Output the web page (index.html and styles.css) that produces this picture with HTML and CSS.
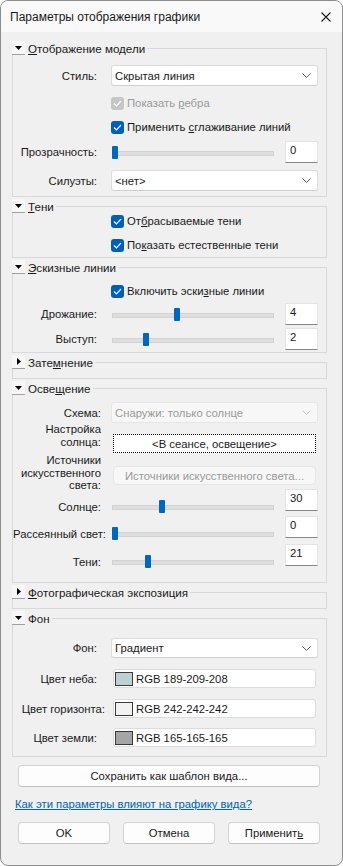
FILE: index.html
```html
<!DOCTYPE html>
<html lang="ru">
<head>
    <meta charset="UTF-8">
    <meta name="viewport" content="width=device-width, initial-scale=1.0">
    <title>Параметры отображения графики</title>
    <link rel="stylesheet" href="styles.css">
</head>
<body>
<div class="window">

    <div class="titlebar">
        <span class="title">Параметры отображения графики</span>
        <svg class="close" width="10" height="10" viewBox="0 0 10 10"><path d="M0.5 0.5 L9.5 9.5 M9.5 0.5 L0.5 9.5" stroke="#1a1a1a" stroke-width="1.1" fill="none"/></svg>
    </div>

    <div class="content">

        <!-- Отображение модели -->
        <section class="group">
            <div class="group-head">
                <span class="toggle"><svg width="7" height="4" viewBox="0 0 7 4"><polygon points="0,0 7,0 3.5,4" fill="#000"/></svg></span>
                <span class="group-title"><u>О</u>тображение модели</span>
            </div>
            <div class="group-box box-model">
                <div class="row">
                    <span class="label">Стиль:</span>
                    <div class="select">Скрытая линия<svg class="chevron" width="9" height="5" viewBox="0 0 9 5"><path d="M0.5 0.5 L4.5 4.5 L8.5 0.5" stroke="#5c5c5c" fill="none"/></svg></div>
                </div>
                <div class="check-row first">
                    <span class="checkbox disabled"><svg width="9" height="7" viewBox="0 0 9 7"><path d="M1 3.5 L3.5 6 L8 1" stroke="#fff" stroke-width="1.2" fill="none"/></svg></span>
                    <span class="check-text muted">Показать <u>р</u>ебра</span>
                </div>
                <div class="check-row">
                    <span class="checkbox"><svg width="9" height="7" viewBox="0 0 9 7"><path d="M1 3.5 L3.5 6 L8 1" stroke="#fff" stroke-width="1.2" fill="none"/></svg></span>
                    <span class="check-text">Применить <u>с</u>глаживание линий</span>
                </div>
                <div class="row slider-row transp">
                    <span class="label">Прозрачность:</span>
                    <div class="slider"><span class="thumb" style="--v:0"></span></div>
                    <div class="num">0</div>
                </div>
                <div class="row silh">
                    <span class="label">Силуэты:</span>
                    <div class="select">&lt;нет&gt;<svg class="chevron" width="9" height="5" viewBox="0 0 9 5"><path d="M0.5 0.5 L4.5 4.5 L8.5 0.5" stroke="#5c5c5c" fill="none"/></svg></div>
                </div>
            </div>
        </section>

        <!-- Тени -->
        <section class="group">
            <div class="group-head">
                <span class="toggle"><svg width="7" height="4" viewBox="0 0 7 4"><polygon points="0,0 7,0 3.5,4" fill="#000"/></svg></span>
                <span class="group-title"><u>Т</u>ени</span>
            </div>
            <div class="group-box box-shadows">
                <div class="check-row">
                    <span class="checkbox"><svg width="9" height="7" viewBox="0 0 9 7"><path d="M1 3.5 L3.5 6 L8 1" stroke="#fff" stroke-width="1.2" fill="none"/></svg></span>
                    <span class="check-text">От<u>б</u>расываемые тени</span>
                </div>
                <div class="check-row">
                    <span class="checkbox"><svg width="9" height="7" viewBox="0 0 9 7"><path d="M1 3.5 L3.5 6 L8 1" stroke="#fff" stroke-width="1.2" fill="none"/></svg></span>
                    <span class="check-text">По<u>к</u>азать естественные тени</span>
                </div>
            </div>
        </section>

        <!-- Эскизные линии -->
        <section class="group">
            <div class="group-head">
                <span class="toggle"><svg width="7" height="4" viewBox="0 0 7 4"><polygon points="0,0 7,0 3.5,4" fill="#000"/></svg></span>
                <span class="group-title"><u>Э</u>скизные линии</span>
            </div>
            <div class="group-box box-sketch">
                <div class="check-row">
                    <span class="checkbox"><svg width="9" height="7" viewBox="0 0 9 7"><path d="M1 3.5 L3.5 6 L8 1" stroke="#fff" stroke-width="1.2" fill="none"/></svg></span>
                    <span class="check-text">Включить эски<u>з</u>ные линии</span>
                </div>
                <div class="row slider-row">
                    <span class="label">Дрожание:</span>
                    <div class="slider"><span class="thumb" style="--v:0.4"></span></div>
                    <div class="num">4</div>
                </div>
                <div class="row slider-row next">
                    <span class="label">Выступ:</span>
                    <div class="slider"><span class="thumb" style="--v:0.2"></span></div>
                    <div class="num">2</div>
                </div>
            </div>
        </section>

        <!-- Затемнение -->
        <section class="group">
            <div class="group-head">
                <span class="toggle"><svg width="4" height="7" viewBox="0 0 4 7"><polygon points="0,0 4,3.5 0,7" fill="#000"/></svg></span>
                <span class="group-title">Зате<u>м</u>нение</span>
            </div>
            <div class="group-box collapsed"></div>
        </section>

        <!-- Освещение -->
        <section class="group">
            <div class="group-head">
                <span class="toggle"><svg width="7" height="4" viewBox="0 0 7 4"><polygon points="0,0 7,0 3.5,4" fill="#000"/></svg></span>
                <span class="group-title">Осве<u>щ</u>ение</span>
            </div>
            <div class="group-box box-light">
                <div class="row">
                    <span class="label">Схема:</span>
                    <div class="select disabled">Снаружи: только солнце<svg class="chevron" width="9" height="5" viewBox="0 0 9 5"><path d="M0.5 0.5 L4.5 4.5 L8.5 0.5" stroke="#c4c4c4" fill="none"/></svg></div>
                </div>
                <div class="row tall sun-setup">
                    <span class="label multi">Настройка<br>солнца:</span>
                    <button type="button" class="field-btn focused">&lt;В сеансе, освещение&gt;</button>
                </div>
                <div class="row tall artificial">
                    <span class="label multi">Источники<br>искусственного<br>света:</span>
                    <button type="button" class="field-btn disabled">Источники искусственного света...</button>
                </div>
                <div class="row slider-row lifted">
                    <span class="label">Солнце:</span>
                    <div class="slider"><span class="thumb" style="--v:0.3"></span></div>
                    <div class="num">30</div>
                </div>
                <div class="row slider-row lifted ambient">
                    <span class="label">Рассеянный свет:</span>
                    <div class="slider"><span class="thumb" style="--v:0"></span></div>
                    <div class="num">0</div>
                </div>
                <div class="row slider-row lifted last">
                    <span class="label">Тени:</span>
                    <div class="slider"><span class="thumb" style="--v:0.21"></span></div>
                    <div class="num">21</div>
                </div>
            </div>
        </section>

        <!-- Фотографическая экспозиция -->
        <section class="group">
            <div class="group-head">
                <span class="toggle"><svg width="4" height="7" viewBox="0 0 4 7"><polygon points="0,0 4,3.5 0,7" fill="#000"/></svg></span>
                <span class="group-title"><u>Ф</u>отографическая экспозиция</span>
            </div>
            <div class="group-box collapsed"></div>
        </section>

        <!-- Фон -->
        <section class="group">
            <div class="group-head">
                <span class="toggle"><svg width="7" height="4" viewBox="0 0 7 4"><polygon points="0,0 7,0 3.5,4" fill="#000"/></svg></span>
                <span class="group-title">Фон</span>
            </div>
            <div class="group-box box-bg">
                <div class="row bg-select">
                    <span class="label">Фон:</span>
                    <div class="select">Градиент<svg class="chevron" width="9" height="5" viewBox="0 0 9 5"><path d="M0.5 0.5 L4.5 4.5 L8.5 0.5" stroke="#5c5c5c" fill="none"/></svg></div>
                </div>
                <div class="row color-row">
                    <span class="label">Цвет неба:</span>
                    <div class="color-field"><span class="swatch sky"></span>RGB 189-209-208</div>
                </div>
                <div class="row color-row">
                    <span class="label wide">Цвет горизонта:</span>
                    <div class="color-field"><span class="swatch horizon"></span>RGB 242-242-242</div>
                </div>
                <div class="row color-row ground-row">
                    <span class="label">Цвет земли:</span>
                    <div class="color-field"><span class="swatch ground"></span>RGB 165-165-165</div>
                </div>
            </div>
        </section>

        <button type="button" class="btn save-btn">Сохранить как шаблон вида...</button>

        <a href="#" class="help-link">Как эти параметры влияют на графику вида?</a>

        <div class="footer">
            <button type="button" class="btn">OK</button>
            <button type="button" class="btn">Отмена</button>
            <button type="button" class="btn">Применит<u>ь</u></button>
        </div>

    </div>
</div>
</body>
</html>
```

FILE: styles.css
```css
:root {
    --fundo: #f0f0f0;
    --borda-grupo: #d9d9d9;
    --borda-campo: #dcdcdc;
    --azul: #005fb8;
    --texto: #1a1a1a;
    --cinza-texto: #9a9a9a;
}

* {
    box-sizing: border-box;
}

body {
    margin: 0;
    background: #fff;
    font-family: "Liberation Sans", Arial, sans-serif;
    font-size: 11.3px;
    color: var(--texto);
}

.window {
    width: 343px;
    height: 866px;
    border: 1px solid #8e8e8e;
    border-radius: 8px;
    background: var(--fundo);
    overflow: hidden;
}

.titlebar {
    height: 31px;
    background: #f9f9f9;
    display: flex;
    align-items: center;
    justify-content: space-between;
    padding: 0 11px 0 9px;
    font-size: 12px;
}

.content {
    padding: 9px 0 0 11px;
}

/* grupos */
.group + .group {
    margin-top: 2px;
}

.group-head {
    position: relative;
    z-index: 1;
    height: 14px;
    width: max-content;
    display: flex;
    align-items: center;
    background: var(--fundo);
    padding-right: 2px;
    font-size: 11.6px;
}

.toggle {
    width: 13px;
    height: 14px;
    background: #f7f7f7;
    border-bottom: 1px solid #a0a0a0;
    display: flex;
    align-items: center;
    justify-content: center;
    margin-right: 3px;
}

.group-box {
    width: 315px;
    margin-top: -7px;
    border: 1px solid var(--borda-grupo);
    padding-right: 8px;
}

.collapsed {
    height: 17px;
}

.box-model {
    padding-top: 16px;
    padding-bottom: 5px;
}

.box-shadows {
    padding-top: 2px;
}

.box-sketch {
    padding-top: 11px;
    padding-bottom: 2px;
}

.box-light {
    padding-top: 13px;
    padding-bottom: 14px;
}

.box-bg {
    padding-top: 19px;
    padding-bottom: 9px;
}

/* linhas */
.row {
    display: flex;
    align-items: center;
    height: 21px;
}

.label {
    flex: none;
    width: 84px;
    margin-right: 14px;
    text-align: right;
    white-space: nowrap;
}

.check-row {
    display: flex;
    align-items: center;
    height: 24px;
    padding-left: 98px;
}

.check-row.first {
    margin-top: 5px;
}

.checkbox {
    width: 13px;
    height: 13px;
    border-radius: 3px;
    background: var(--azul);
    display: flex;
    align-items: center;
    justify-content: center;
    margin-right: 3px;
}

.checkbox.disabled {
    background: #c6c6c6;
}

.muted {
    color: var(--cinza-texto);
}

.select {
    flex: 1;
    height: 21px;
    background: #fff;
    border: 1px solid var(--borda-campo);
    border-bottom-color: #cfcfcf;
    border-radius: 3px;
    display: flex;
    align-items: center;
    justify-content: space-between;
    padding: 0 6px 0 3px;
}

.select.disabled {
    background: #f7f7f7;
    border-color: #e6e6e6;
    color: var(--cinza-texto);
}

.slider-row {
    height: 22px;
}

.slider-row.transp {
    margin-top: 2px;
}

.slider-row.next {
    margin-top: 3px;
}

.silh {
    margin-top: 7px;
}

.slider {
    position: relative;
    flex: 1;
    height: 13px;
    margin-left: 1px;
    margin-right: 11px;
}

.slider::before {
    content: "";
    position: absolute;
    left: 0;
    right: 0;
    top: 5px;
    height: 3px;
    background: #dedede;
    border: 1px solid #d2d2d2;
}

.thumb {
    position: absolute;
    top: 0;
    left: calc((100% - 6px) * var(--v));
    width: 6px;
    height: 13px;
    border-radius: 1px;
    background: #0067c0;
}

.num {
    flex: none;
    width: 33px;
    height: 22px;
    background: #fff;
    border: 1px solid #e4e4e4;
    border-bottom-color: #868686;
    padding: 1px 0 0 4px;
    line-height: 15px;
}

/* iluminacao */
.box-light .label {
    width: 88px;
    margin-right: 10px;
}

.tall {
    align-items: flex-start;
}

.label.multi {
    line-height: 12.5px;
}

.sun-setup {
    height: 30px;
}

.artificial {
    height: 35px;
    margin-top: 1px;
}

.field-btn {
    flex: 1;
    height: 19px;
    margin: 11px 2px 0 2px;
    font: inherit;
    padding: 0;
    color: var(--texto);
}

.field-btn.focused {
    background: #fff;
    border: 1px dotted #000;
}

.field-btn.disabled {
    margin-top: 12px;
    background: #f7f7f7;
    border: 1px solid #e6e6e6;
    border-radius: 4px;
    color: var(--cinza-texto);
}

.lifted {
    height: 24px;
    align-items: flex-start;
}

.lifted .label {
    line-height: 14px;
    margin-top: 11px;
}

.lifted .slider {
    margin-top: 11px;
}

.ambient {
    margin-top: 3px;
}

.last {
    margin-top: 4px;
}

.box-light .ambient .label {
    margin-right: 5px;
    width: 93px;
}

/* fundo */
.bg-select {
    height: 20px;
}

.bg-select .select {
    height: 20px;
}

.color-row {
    height: 19px;
    margin-top: 11px;
}

.ground-row {
    margin-top: 10px;
}

.label.wide {
    width: 92px;
    margin-right: 6px;
}

.color-field {
    flex: 1;
    height: 19px;
    margin: 0 2px;
    background: #fff;
    border: 1px solid var(--borda-campo);
    border-radius: 3px;
    display: flex;
    align-items: center;
    padding-left: 1px;
}

.swatch {
    width: 18px;
    height: 14px;
    border: 1px solid #3a3a3a;
    margin-right: 3px;
}

.sky {
    background: rgb(189, 209, 208);
}

.horizon {
    background: rgb(242, 242, 242);
}

.ground {
    background: rgb(165, 165, 165);
}

/* botoes */
.btn {
    display: block;
    height: 22px;
    font: inherit;
    color: var(--texto);
    background: #fdfdfd;
    border: 1px solid #d3d3d3;
    border-bottom-color: #c2c2c2;
    border-radius: 4px;
    padding: 0;
}

.save-btn {
    width: 302px;
    margin: 8px 0 0 6px;
}

.help-link {
    display: block;
    width: max-content;
    margin: 9px 0 0 3px;
    line-height: 16px;
    color: #0063b1;
    text-decoration: underline;
}

.footer {
    display: flex;
    gap: 13px;
    margin: 10px 0 0 6px;
}

.footer .btn {
    width: 92px;
}
```
